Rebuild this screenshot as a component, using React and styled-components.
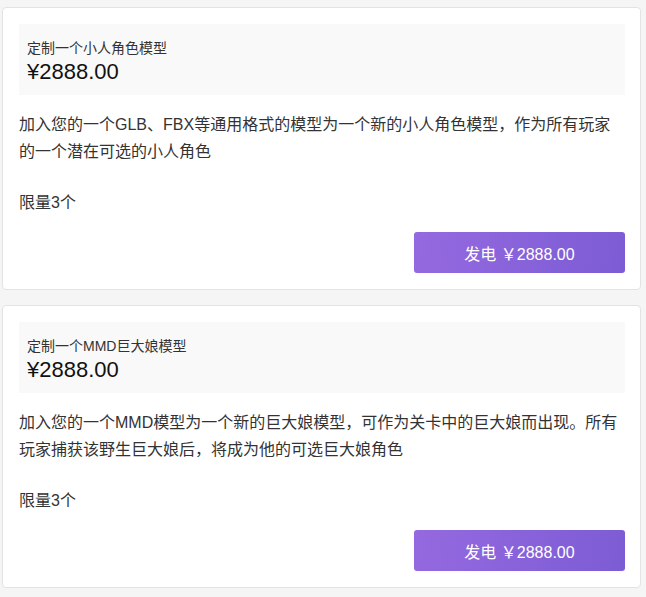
import React from 'react';
import styled, { createGlobalStyle } from 'styled-components';

const GlobalStyle = createGlobalStyle`
  html, body {
    margin: 0;
    padding: 0;
    background: #f5f5f5;
    font-family: "Liberation Sans", "Noto Sans CJK SC", sans-serif;
  }
`;

const Page = styled.div`
  padding: 7px 5px 8px 2px;
  display: flex;
  flex-direction: column;
  gap: 15px;
`;

const Card = styled.div`
  background: #fff;
  border: 1px solid #e3e3e3;
  border-radius: 4px;
  padding: 16px 15px 16px 16px;
`;

const Header = styled.div`
  background: #f9f9f9;
  padding: 15px 8px 8px;
  display: flex;
  flex-direction: column;
`;

const Title = styled.div`
  font-size: 14px;
  line-height: 18px;
  color: #333;
`;

const Price = styled.div`
  font-size: 22px;
  line-height: 30px;
  color: #111;
`;

const Desc = styled.p`
  margin: 16px 0 0;
  font-size: 16px;
  line-height: 27px;
  color: #333;
`;

const Limit = styled.p`
  margin: 24px 0 0;
  font-size: 16px;
  line-height: 27px;
  color: #333;
`;

const Footer = styled.div`
  display: flex;
  justify-content: flex-end;
  margin-top: 16px;
`;

const PayButton = styled.button`
  width: 211px;
  height: 41px;
  border: none;
  border-radius: 3px;
  background: linear-gradient(100deg, #9569e0 0%, #7c5cd4 100%);
  color: #fff;
  font-family: inherit;
  font-size: 16px;
  cursor: pointer;
`;

const items = [
  {
    title: '定制一个小人角色模型',
    price: '2888.00',
    desc: '加入您的一个GLB、FBX等通用格式的模型为一个新的小人角色模型，作为所有玩家的一个潜在可选的小人角色',
    limit: '限量3个',
  },
  {
    title: '定制一个MMD巨大娘模型',
    price: '2888.00',
    desc: '加入您的一个MMD模型为一个新的巨大娘模型，可作为关卡中的巨大娘而出现。所有玩家捕获该野生巨大娘后，将成为他的可选巨大娘角色',
    limit: '限量3个',
  },
];

const App = () => (
  <>
    <GlobalStyle />
    <Page>
      {items.map(item => (
        <Card key={item.title}>
          <Header>
            <Title>{item.title}</Title>
            <Price>¥{item.price}</Price>
          </Header>
          <Desc>{item.desc}</Desc>
          <Limit>{item.limit}</Limit>
          <Footer>
            <PayButton>发电 ￥{item.price}</PayButton>
          </Footer>
        </Card>
      ))}
    </Page>
  </>
);

export default App;
